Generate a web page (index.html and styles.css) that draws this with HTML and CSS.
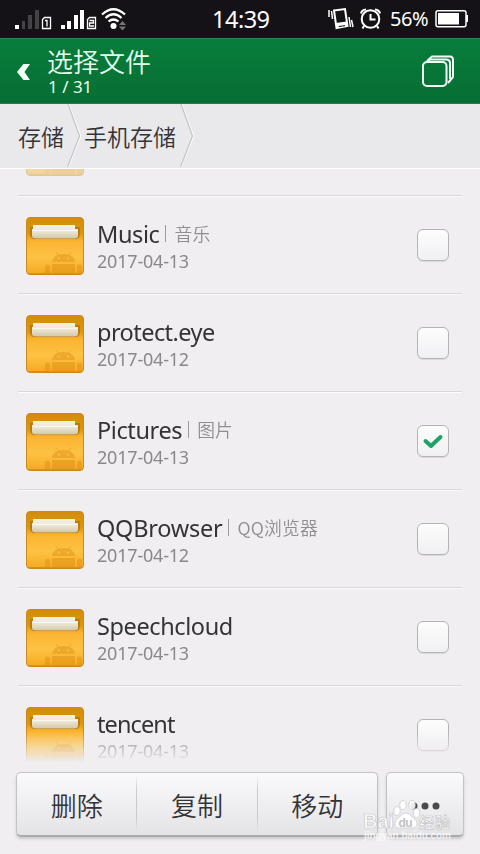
FILE: index.html
```html
<!DOCTYPE html>
<html lang="zh-CN">
<head>
<meta charset="utf-8">
<title>选择文件</title>
<link rel="stylesheet" href="styles.css">
</head>
<body>
<svg class="defs" width="0" height="0">
  <defs>
    <linearGradient id="body" x1="0" y1="0" x2="0" y2="1"><stop offset="0" stop-color="#d18c0c"/><stop offset=".28" stop-color="#dc970f"/><stop offset=".42" stop-color="#fbb431"/><stop offset=".7" stop-color="#fdc244"/><stop offset="1" stop-color="#f6a81f"/></linearGradient>
    <linearGradient id="paper" x1="0" y1="0" x2="0" y2="1"><stop offset="0" stop-color="#f3efe2"/><stop offset=".4" stop-color="#efeadb"/><stop offset="1" stop-color="#d3c8a8"/></linearGradient>
    <symbol id="folder" viewBox="0 0 60 60">
      <rect x="1.500" y="1.500" width="57" height="57" rx="3.500" fill="url(#body)" stroke="#c98c1c"/>
      <path d="M5 11V17Q5 23 10 23H50Q55 23 55 17V11Z" fill="#b97b0c"/>
      <path d="M8 9H50V13H53V20Q53 22.500 49 22.500H11Q7 22.500 7 20V13H8Z" fill="url(#paper)"/>
      <path d="M7.500 14.500H52.500" stroke="#fbf8ee"/>
      <path d="M27 46Q28 38 38.500 38Q49 38 50 46ZM27 48H50V57H27ZM20 51Q20 48.500 22.500 48.500Q25 48.500 25 51V57H20ZM52 51Q52 48.500 54 48.500Q57 48.500 57 51V57H52Z" fill="#d98b10" fill-opacity=".42"/>
      <path d="M31 36L34 40M46 36L43 40" stroke="#d98b10" stroke-opacity=".4"/>
      <circle cx="34" cy="42.500" r="1" fill="#fdc244"/><circle cx="43" cy="42.500" r="1" fill="#fdc244"/>
      <path d="M3 57.500H57" stroke="#d4921b"/>
    </symbol>
  </defs>
</svg>
<div class="screen">
  <div class="status">
    <svg class="signals" width="130" height="38" viewBox="0 0 130 38">
      <path d="M15 25h4v4h-4z" fill="#fff"/><path d="M22 21h3v8h-3zM28 15h4v14h-4zM35 10h4v19h-4z" fill="#444247"/>
      <path d="M61 25h4v4h-4zM67 21h4v8h-4zM74 15h4v14h-4zM80 10h4v19h-4z" fill="#fff"/>
      <g fill="none" stroke="#fff" stroke-width="1.300"><path d="M44.500 17.500h6v11h-8v-9zM89.500 17.500h6v11h-8v-9z"/><path d="M45 20.500h2v6M89.500 20.500h4v2.500h-4v3h4.500"/></g>
      <g fill="none" stroke="#fff" stroke-width="2.200"><path d="M102 14.500Q113.500 4 125 14.500M105.500 18Q113.500 10.500 121.500 18M108.500 21.500Q113.500 17.500 118.500 21.500"/></g>
      <circle cx="113.500" cy="26" r="3" fill="#fff"/><path d="M119 25l3.500-4 3.500 4zM119 26.500l3.500 4 3.500-4z" fill="#77757a"/>
    </svg>
    <div class="clock">14:39</div>
    <svg class="alerts" width="55" height="38" viewBox="0 0 55 38">
      <g fill="none" stroke="#fff"><path d="M7 10.500L18 9L20.500 26L9.500 28Z" stroke-width="2"/><path d="M9 25L20 23.500" stroke-width="4"/><path d="M2 10v7M4.500 11l1 8M22 17l1.500 10M24.500 20l1.500 7" stroke-width="1.500"/></g>
      <path d="M12 26.500l6-.8" stroke="#141216"/>
      <g fill="none" stroke="#fff" stroke-width="2"><circle cx="43.500" cy="19" r="8.800"/><path d="M43.500 14v5.500h5M34 13.500Q34.500 10 39 9.500M53 13.500Q52.500 10 48 9.500M37 26l-1.500 2.500M50 26l1.500 2.500"/></g>
    </svg>
    <div class="percent">56%</div>
    <svg class="battery" width="34" height="20" viewBox="0 0 34 20"><rect x="1" y="1.800" width="30" height="16" rx="2" fill="none" stroke="#fff" stroke-width="1.500"/><path d="M3 4h21v11.500H3z" fill="#fff"/><path d="M32 6v7" stroke="#fff" stroke-width="2"/></svg>
  </div>
  <header class="header">
    <svg class="back" width="16" height="20" viewBox="0 0 16 20"><path d="M7.500 2H14L8.500 10L14 18H7.500L1 10Z" fill="#f2fff6"/></svg>
    <div class="heading"><h1>选择文件</h1><p>1 / 31</p></div>
    <svg class="stack" width="34" height="34" viewBox="0 0 34 34"><g fill="none" stroke="#effff5" stroke-width="2" stroke-linejoin="round"><path d="M6 7L11 2.500H29Q32 2.500 32 6V23L27 29M5 8.500L9 5.500H25Q29 5.500 29 9V25"/><rect x="2" y="8" width="23.500" height="24" rx="4"/></g></svg>
  </header>
  <nav class="crumbs">
    <span class="crumb first">存储</span>
    <svg class="chevron" width="16" height="64" viewBox="0 0 16 64"><path d="M1.500 0L13.500 32L1 63" fill="none" stroke="#f8f7f9" stroke-width="2"/><path d="M1 0L12.500 32L.5 63" fill="none" stroke="#c3c2c6" stroke-width="1.200"/></svg>
    <span class="crumb second">手机存储</span>
    <svg class="chevron" width="16" height="64" viewBox="0 0 16 64"><path d="M1.500 0L13.500 32L1 63" fill="none" stroke="#f8f7f9" stroke-width="2"/><path d="M1 0L12.500 32L.5 63" fill="none" stroke="#c3c2c6" stroke-width="1.200"/></svg>
  </nav>
  <main class="list">
    <div class="row partial"><svg class="folder"><use href="#folder"/></svg></div>
    <div class="row"><svg class="folder"><use href="#folder"/></svg><div class="info"><div class="name"><span class="n1">Music</span><i></i><small>音乐</small></div><div class="date">2017-04-13</div></div><span class="check"></span></div>
    <div class="row"><svg class="folder"><use href="#folder"/></svg><div class="info"><div class="name"><span class="n2">protect.eye</span></div><div class="date">2017-04-12</div></div><span class="check"></span></div>
    <div class="row"><svg class="folder"><use href="#folder"/></svg><div class="info"><div class="name"><span class="n3">Pictures</span><i></i><small>图片</small></div><div class="date">2017-04-13</div></div><span class="check"><svg width="30" height="30" viewBox="0 0 30 30"><path d="M7.500 15L13 20L22.500 11" fill="none" stroke="#22a265" stroke-width="4" stroke-linecap="round" stroke-linejoin="round"/></svg></span></div>
    <div class="row"><svg class="folder"><use href="#folder"/></svg><div class="info"><div class="name"><span class="n4">QQBrowser</span><i></i><small>QQ浏览器</small></div><div class="date">2017-04-12</div></div><span class="check"></span></div>
    <div class="row"><svg class="folder"><use href="#folder"/></svg><div class="info"><div class="name"><span class="n5">Speechcloud</span></div><div class="date">2017-04-13</div></div><span class="check"></span></div>
    <div class="row"><svg class="folder"><use href="#folder"/></svg><div class="info"><div class="name"><span class="n6">tencent</span></div><div class="date">2017-04-13</div></div><span class="check"></span></div>
  </main>
  <footer class="footer">
    <div class="actions"><button>删除</button><button>复制</button><button>移动</button></div>
    <button class="more"><svg width="30" height="8" viewBox="0 0 30 8"><g fill="#4a494c"><circle cx="4" cy="4" r="3.500"/><circle cx="15" cy="4" r="3.500"/><circle cx="26" cy="4" r="3.500"/></g></svg></button>
    <svg class="watermark" width="100" height="52" viewBox="0 0 100 52">
      <g fill="#fff" fill-opacity=".9" stroke="#c8c7ca" stroke-width=".7">
        <ellipse cx="36" cy="19" rx="3.200" ry="4.500"/><ellipse cx="42" cy="13" rx="3.200" ry="4.500"/><ellipse cx="51" cy="13" rx="3.200" ry="4.500"/><ellipse cx="55.500" cy="21" rx="3.200" ry="4.500"/>
        <path d="M45 21Q49 21 51 25Q57 29 56 33Q54 37 50 36H40Q35 37 34 33Q33 29 38.500 25Q41 21 45 21Z"/>
        <text class="baidu" x="2" y="36" textLength="31">Bai</text><text class="jingyan" x="58" y="36" textLength="31">经验</text>
      </g>
      <text class="url" x="3" y="47" textLength="87">jingyan.baidu.com</text>
      <text class="du" x="37.500" y="34.500" textLength="14">du</text>
    </svg>
  </footer>
</div>
</body>
</html>
```
FILE: styles.css
```css
* { box-sizing: border-box; }
body { margin: 0; background: #f0eef1; font-family: "Noto Sans", "Noto Sans CJK SC", sans-serif; color: #343336; }
.defs { position: absolute; }
.screen { width: 480px; height: 854px; overflow: hidden; display: flex; flex-direction: column; }
.status { height: 38px; flex: none; background: #141216; color: #fff; display: flex; align-items: center; }
.signals { flex: none; }
.clock { margin-left: 82px; width: 57px; font-size: 23.5px; line-height: 38px; white-space: nowrap; letter-spacing: -.5px; }
.alerts { margin-left: 58px; flex: none; }
.percent { margin-left: 8px; width: 39px; font-size: 20px; letter-spacing: -.5px; line-height: 36px; padding-bottom: 1px; }
.battery { margin-left: 6px; margin-top: -1px; }
.header { height: 66px; flex: none; display: flex; align-items: center; padding: 0 25px 0 16px; background: linear-gradient(#087d3b, #076e33); border-top: 1px solid #2b8653; border-bottom: 1px solid #2a7b4b; color: #e4ffee; }
.back { margin-top: 1px; }
.heading { margin-left: 15px; flex: 1; }
h1 { margin: 0; height: 31px; font: 350 26px/27px "Noto Sans CJK SC", sans-serif; }
p { margin: 0 0 0 1px; font-size: 17px; line-height: 18px; }
.crumbs { height: 65px; flex: none; display: flex; background: #e9e8eb; border-bottom: 1px solid #fff; }
.crumb { font: 350 23px/65px "Noto Sans CJK SC", sans-serif; white-space: nowrap; }
.first { margin-left: 18px; width: 49px; }
.second { margin-left: 1px; width: 96px; }
.chevron { flex: none; }
.list { height: 593px; flex: none; overflow: hidden; padding: 0 18px; -webkit-mask-image: linear-gradient(#000 0 563px, transparent 593px); mask-image: linear-gradient(#000 0 563px, transparent 593px); }
.row { height: 98px; display: flex; align-items: flex-start; padding: 20px 13px 0 7px; border-bottom: 1px solid #d8d7da; box-shadow: 0 1px #fbfafc; }
.partial { margin-top: -72px; height: 99px; }
.partial .folder { opacity: .4; }
.folder { width: 60px; height: 60px; flex: none; }
.info { flex: 1; margin-left: 12px; }
.name { height: 34px; padding-top: 1px; display: flex; align-items: center; font-size: 23.5px; white-space: nowrap; }
.n1 { letter-spacing: -.4px; }
.n2 { letter-spacing: -.55px; }
.n3 { letter-spacing: -.4px; }
.n4 { letter-spacing: -.25px; }
.n5 { letter-spacing: -.4px; }
.n6 { letter-spacing: -.9px; }
.name i { width: 1px; height: 17px; background: #9c9b9e; margin: 0 8px 0 6px; }
small { font: 350 17.8px/30px "Noto Sans CJK SC", sans-serif; color: #8f8e91; padding-bottom: 1px; letter-spacing: .2px; }
.date { margin-top: -1px; font-size: 18px; line-height: 24px; color: #89888b; letter-spacing: -.2px; }
.check { width: 32px; height: 32px; margin-top: 13px; border: 1px solid #b4b3b6; border-radius: 6px; background: linear-gradient(#fdfdfd, #f0eff2); box-shadow: 0 1px #d9d8db; flex: none; }
.check svg { display: block; }
.footer { position: relative; height: 92px; padding: 10px 16px 17px; display: flex; gap: 8px; }
.actions, .more { height: 65px; border: 1px solid #c3c2c5; border-bottom: 2px solid #aaa9ac; border-radius: 5px; background: linear-gradient(#faf9fb, #e4e3e6); box-shadow: 0 2px 3px #c9c8cb; }
.actions { width: 362px; display: flex; }
button { margin: 0; padding: 0; border: 0; background: none; color: #343336; font: 350 26px/60px "Noto Sans CJK SC", sans-serif; }
.actions button { flex: 1; padding: 1px 0 0 0; }
.actions button + button { border-left: 1px solid; border-image: linear-gradient(transparent 5%, #cac9cc 30% 70%, transparent 95%) 1; }
.more { width: 78px; line-height: 0; }
.watermark { position: absolute; left: 361px; top: 30px; }
.baidu { font: 700 20px "Liberation Sans", sans-serif; }
.jingyan { font: 700 15px "Noto Sans CJK SC", sans-serif; }
.url { font: 700 10px "Liberation Sans", sans-serif; fill: #fff; fill-opacity: .75; }
.du { font: 700 12px "Liberation Sans", sans-serif; fill: #c2c1c4; }
```
